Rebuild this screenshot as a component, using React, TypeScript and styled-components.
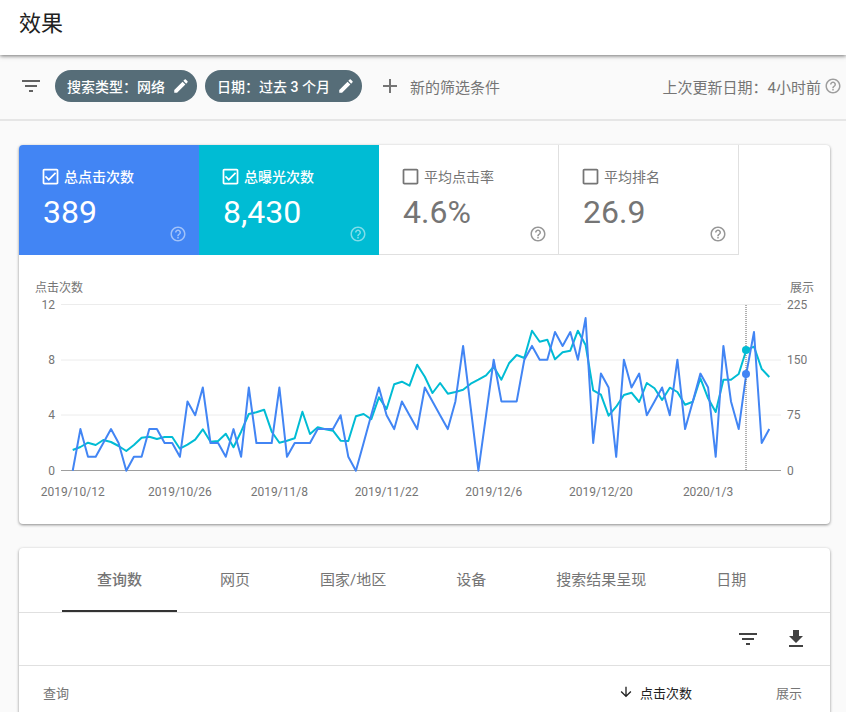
import * as React from 'react';
import styled, { createGlobalStyle } from 'styled-components';

const GlobalStyle = createGlobalStyle`
  html, body {
    margin: 0;
    height: 712px;
    overflow: hidden;
    background: #fafafa;
    font-family: Roboto, "Noto Sans CJK SC", sans-serif;
  }
`;

const Page = styled.div`
  display: flex;
  flex-direction: column;
  width: 846px;
`;

const Header = styled.header`
  position: relative;
  z-index: 2;
  display: flex;
  align-items: center;
  height: 55px;
  padding: 0 0 14px 19px;
  box-sizing: border-box;
  background: #fff;
  box-shadow: 0 1px 4px rgba(0, 0, 0, 0.55);
`;

const Title = styled.h1`
  margin: 0;
  font-size: 22px;
  font-weight: 400;
  color: #212121;
`;

const FilterBar = styled.div`
  display: flex;
  align-items: center;
  height: 66px;
  padding: 0 4px 2px 19px;
  box-sizing: border-box;
  border-bottom: 2px solid #e6e6e6;
`;

const IconSlot = styled.span<{ $size: number; $color: string }>`
  display: inline-flex;
  flex: none;
  width: ${(p) => p.$size}px;
  height: ${(p) => p.$size}px;
  color: ${(p) => p.$color};
  svg {
    display: block;
    width: 100%;
    height: 100%;
    fill: currentColor;
  }
`;

const Chip = styled.div`
  display: flex;
  align-items: center;
  height: 32px;
  padding: 0 7px 0 12px;
  margin-right: 8px;
  border-radius: 16px;
  background: #566d78;
  color: #fff;
  font-size: 14px;
  font-weight: 500;
  white-space: nowrap;
`;

const ChipLabel = styled.span`
  margin-right: 7px;
`;

const FilterIconWrap = styled.div`
  display: flex;
  margin-right: 12px;
`;

const AddFilter = styled.div`
  display: flex;
  align-items: center;
  margin-left: 8px;
  gap: 8px;
  font-size: 15px;
  color: #757575;
`;

const Updated = styled.div`
  display: flex;
  align-items: center;
  gap: 3px;
  margin-left: auto;
  font-size: 15px;
  color: #757575;
`;

const Card = styled.section`
  margin: 0 16px 0 19px;
  background: #fff;
  border-radius: 4px;
  box-shadow: 0 1px 3px rgba(0, 0, 0, 0.45);
`;

const MainCard = styled(Card)`
  margin-top: 24px;
  overflow: hidden;
`;

const TabsCard = styled(Card)`
  margin-top: 24px;
`;

const Tiles = styled.div`
  display: flex;
`;

const Tile = styled.div<{ $bg?: string }>`
  position: relative;
  width: 180px;
  height: 110px;
  padding: 22px 0 0 24px;
  box-sizing: border-box;
  background: ${(p) => p.$bg ?? '#fff'};
  color: ${(p) => (p.$bg ? '#fff' : '#757575')};
  border-right: ${(p) => (p.$bg ? 'none' : '1px solid #e0e0e0')};
  border-bottom: ${(p) => (p.$bg ? 'none' : '1px solid #e0e0e0')};
`;

const TileHead = styled.div<{ $strong: boolean }>`
  display: flex;
  align-items: center;
  gap: 3px;
  height: 18px;
  margin-left: -3px;
  font-size: 14px;
  font-weight: ${(p) => (p.$strong ? 500 : 400)};
`;

const TileValue = styled.div`
  margin-top: 8px;
  font-size: 32px;
  line-height: 38px;
`;

const TileHelp = styled.span<{ $light: boolean }>`
  position: absolute;
  right: ${(p) => (p.$light ? 12 : 11)}px;
  bottom: ${(p) => (p.$light ? 12 : 11)}px;
  display: flex;
  opacity: ${(p) => (p.$light ? 0.5 : 0.75)};
`;

const ChartSvg = styled.svg`
  display: block;
  width: 811px;
  height: 269px;
  font-family: Roboto, "Noto Sans CJK SC", sans-serif;
`;

const AxisText = styled.text`
  font-size: 12px;
  fill: #757575;
`;

const Tabs = styled.div`
  display: flex;
  height: 65px;
  padding-left: 43px;
  box-sizing: border-box;
  border-bottom: 1px solid #e0e0e0;
`;

const Tab = styled.div<{ $active?: boolean }>`
  display: flex;
  align-items: center;
  height: 64px;
  padding: 0 35px 2px;
  margin-right: ${(p) => (p.$active ? 8 : 0)}px;
  box-sizing: border-box;
  font-size: 15px;
  font-weight: ${(p) => (p.$active ? 500 : 400)};
  color: #757575;
  white-space: nowrap;
  border-bottom: 2px solid ${(p) => (p.$active ? '#333' : 'transparent')};
`;

const TableTools = styled.div`
  display: flex;
  align-items: center;
  justify-content: flex-end;
  gap: 24px;
  height: 53px;
  padding-right: 22px;
  box-sizing: border-box;
  border-bottom: 1px solid #e0e0e0;
`;

const TableHead = styled.div`
  display: flex;
  align-items: center;
  height: 52px;
  padding: 0 28px 0 24px;
  font-size: 13px;
  color: #757575;
`;

const QueryCol = styled.div`
  flex: 1;
`;

const SortCol = styled.div`
  display: flex;
  align-items: center;
  gap: 6px;
  margin-right: 84px;
  color: #212121;
`;

const icons = {
  filter: 'M10 18h4v-2h-4v2zM3 6v2h18V6H3zm3 7h12v-2H6v2z',
  edit: 'M3 17.25V21h3.75L17.81 9.94l-3.75-3.75L3 17.25zM20.71 7.04c.39-.39.39-1.02 0-1.41l-2.34-2.34c-.39-.39-1.02-.39-1.41 0l-1.83 1.83 3.75 3.75 1.83-1.83z',
  add: 'M19 13h-6v6h-2v-6H5v-2h6V5h2v6h6v2z',
  help: 'M11 18h2v-2h-2v2zm1-16C6.48 2 2 6.48 2 12s4.48 10 10 10 10-4.48 10-10S17.52 2 12 2zm0 18c-4.41 0-8-3.59-8-8s3.59-8 8-8 8 3.59 8 8-3.59 8-8 8zm0-14c-2.21 0-4 1.79-4 4h2c0-1.1.9-2 2-2s2 .9 2 2c0 2-3 1.75-3 5h2c0-2.25 3-2.5 3-5 0-2.21-1.79-4-4-4z',
  download: 'M19 9h-4V3H9v6H5l7 7 7-7zM5 18v2h14v-2H5z',
  arrow: 'M20 12l-1.41-1.41L13 16.17V4h-2v12.17l-5.58-5.59L4 12l8 8 8-8z',
  blank: 'M19 5v14H5V5h14m0-2H5c-1.1 0-2 .9-2 2v14c0 1.1.9 2 2 2h14c1.1 0 2-.9 2-2V5c0-1.1-.9-2-2-2z',
  checked: 'M19 5v14H5V5h14m0-2H5c-1.1 0-2 .9-2 2v14c0 1.1.9 2 2 2h14c1.1 0 2-.9 2-2V5c0-1.1-.9-2-2-2zM10 17l-4.5-4.5 1.41-1.41L10 14.17l7.09-7.09L18.5 8.5 10 17z',
};

const Icon: React.FC<{ name: keyof typeof icons; size: number; color: string }> = ({ name, size, color }) => (
  <IconSlot $size={size} $color={color}>
    <svg viewBox="0 0 24 24">
      <path d={icons[name]} />
    </svg>
  </IconSlot>
);

const clicks = [
  0, 3, 1, 1, 2, 3, 2, 0, 1, 1, 3, 3, 2, 2, 1, 5, 4, 6, 2, 2, 1, 3, 1, 6, 2, 2, 2, 6, 1, 2, 2, 2, 3, 3, 3, 4, 1, 0, 2, 4, 6, 4,
  3, 5, 4, 3, 6, 5, 4, 3, 5, 9, 4.5, 0, 4, 8, 5, 5, 5, 8, 9, 8, 8, 10, 9, 10, 8, 11, 2, 7, 6, 1, 8, 6, 7, 4, 5, 6, 4, 8, 3, 5, 7,
  6, 1, 9, 5, 3, 7, 10, 2, 3,
];

// measured from the chart, in 3x crop rows below y=295
const impressions = [
  465, 456, 443, 450, 435, 441, 453, 468, 450, 428, 425, 432, 426, 426, 461, 449, 434, 403, 440, 438, 416, 457, 410, 357, 352,
  344, 410, 443, 437, 430, 350, 417, 397, 403, 407, 437, 438, 364, 357, 373, 307, 342, 268, 260, 272, 209, 245, 294, 264, 296,
  291, 284, 266, 254, 241, 215, 254, 205, 180, 189, 107, 140, 134, 193, 172, 167, 107, 150, 286, 299, 362, 335, 300, 293, 321,
  264, 280, 315, 278, 291, 329, 320, 250, 310, 351, 254, 254, 237, 165, 155, 222, 246,
];

const xAt = (i: number) => 72.7 + i * 7.655;
const clickPoints = clicks.map((v, i) => `${xAt(i).toFixed(1)},${(470.7 - v * 13.87).toFixed(1)}`).join(' ');
const impressionPoints = impressions.map((v, i) => `${xAt(i).toFixed(1)},${(295 + v / 3).toFixed(1)}`).join(' ');

const rows = [
  { y: 304.5, left: '12', right: '225' },
  { y: 360, left: '8', right: '150' },
  { y: 415, left: '4', right: '75' },
  { y: 470.5, left: '0', right: '0' },
];

const dates = [
  { i: 0, label: '2019/10/12' },
  { i: 14, label: '2019/10/26' },
  { i: 27, label: '2019/11/8' },
  { i: 41, label: '2019/11/22' },
  { i: 55, label: '2019/12/6' },
  { i: 69, label: '2019/12/20' },
  { i: 83, label: '2020/1/3' },
];

const tiles = [
  { label: '总点击次数', value: '389', bg: '#4285f4' },
  { label: '总曝光次数', value: '8,430', bg: '#00bcd4' },
  { label: '平均点击率', value: '4.6%' },
  { label: '平均排名', value: '26.9' },
];

const tabs = ['查询数', '网页', '国家/地区', '设备', '搜索结果呈现', '日期'];

const Chart: React.FC = () => (
  <ChartSvg viewBox="19 255 811 269">
    <AxisText x={35} y={292}>点击次数</AxisText>
    <AxisText x={790} y={292}>展示</AxisText>
    {rows.map((r, i) => (
      <g key={r.y}>
        <line x1={61} x2={781} y1={r.y} y2={r.y} stroke={i === 3 ? '#9e9e9e' : '#ececec'} strokeWidth={1} />
        <AxisText x={55} y={r.y + 4} textAnchor="end">{r.left}</AxisText>
        <AxisText x={787} y={r.y + 4}>{r.right}</AxisText>
      </g>
    ))}
    {dates.map((d) => (
      <AxisText key={d.label} x={xAt(d.i)} y={496} textAnchor="middle">{d.label}</AxisText>
    ))}
    <polyline points={impressionPoints} fill="none" stroke="#00bcd4" strokeWidth={2} strokeLinejoin="round" />
    <polyline points={clickPoints} fill="none" stroke="#4285f4" strokeWidth={2} strokeLinejoin="round" />
    <line x1={746} x2={746} y1={305} y2={470} stroke="#616161" strokeWidth={1} strokeDasharray="1 1" />
    <circle cx={746} cy={374} r={4} fill="#4285f4" />
    <circle cx={746} cy={350} r={4} fill="#00bcd4" />
  </ChartSvg>
);

const App: React.FC = () => (
  <Page>
    <GlobalStyle />
    <Header>
      <Title>效果</Title>
    </Header>
    <FilterBar>
      <FilterIconWrap>
        <Icon name="filter" size={24} color="#616161" />
      </FilterIconWrap>
      <Chip>
        <ChipLabel>搜索类型：网络</ChipLabel>
        <Icon name="edit" size={18} color="#fff" />
      </Chip>
      <Chip>
        <ChipLabel>日期：过去 3 个月</ChipLabel>
        <Icon name="edit" size={18} color="#fff" />
      </Chip>
      <AddFilter>
        <Icon name="add" size={24} color="#757575" />
        新的筛选条件
      </AddFilter>
      <Updated>
        上次更新日期：4小时前
        <Icon name="help" size={18} color="#9e9e9e" />
      </Updated>
    </FilterBar>
    <MainCard>
      <Tiles>
        {tiles.map((t) => (
          <Tile key={t.label} $bg={t.bg}>
            <TileHead $strong={!!t.bg}>
              <Icon name={t.bg ? 'checked' : 'blank'} size={21} color={t.bg ? '#fff' : '#757575'} />
              {t.label}
            </TileHead>
            <TileValue>{t.value}</TileValue>
            <TileHelp $light={!!t.bg}>
              <Icon name="help" size={18} color={t.bg ? '#fff' : '#757575'} />
            </TileHelp>
          </Tile>
        ))}
      </Tiles>
      <Chart />
    </MainCard>
    <TabsCard>
      <Tabs>
        {tabs.map((t, i) => (
          <Tab key={t} $active={i === 0}>{t}</Tab>
        ))}
      </Tabs>
      <TableTools>
        <Icon name="filter" size={24} color="#424242" />
        <Icon name="download" size={24} color="#424242" />
      </TableTools>
      <TableHead>
        <QueryCol>查询</QueryCol>
        <SortCol>
          <Icon name="arrow" size={16} color="#212121" />
          点击次数
        </SortCol>
        <span>展示</span>
      </TableHead>
    </TabsCard>
  </Page>
);

export default App;
